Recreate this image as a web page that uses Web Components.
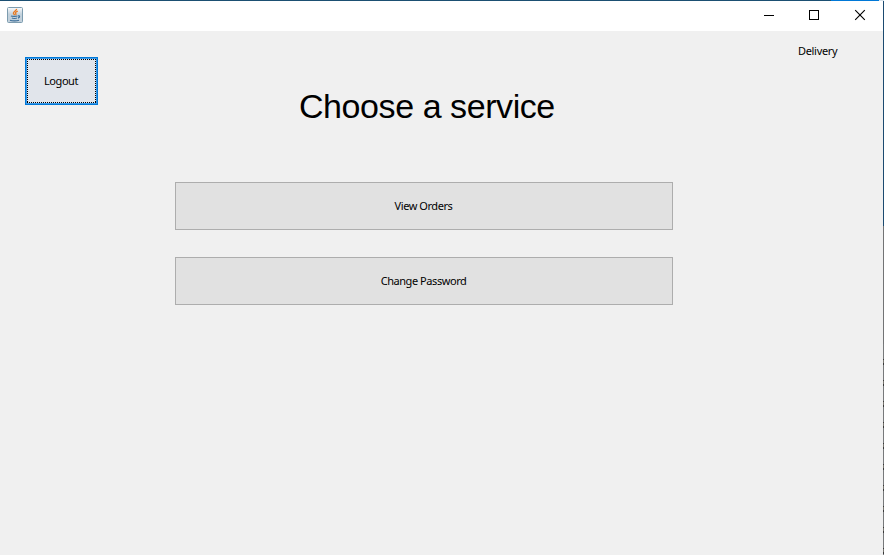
<!DOCTYPE html>
<html lang="en"><head><meta charset="utf-8"><title>Choose a service</title>
<style>html,body{margin:0;height:100%;overflow:hidden;background:#f0f0f0}</style></head>
<body>
<app-window>
  <title-bar slot="title"></title-bar>
  <service-view></service-view>
</app-window>
<script>
function define(name, html) {
  const t = document.createElement('template');
  t.innerHTML = html;
  customElements.define(name, class extends HTMLElement {
    constructor() {
      super();
      this.attachShadow({mode: 'open'}).append(t.content.cloneNode(true));
    }
  });
}

define('app-window', `<style>
:host{display:grid;grid-template:1px 30px 1fr / 1fr 1px;width:884px;height:555px;background:#f0f0f0;overflow:hidden;font:11px/14px "Noto Sans","DejaVu Sans",sans-serif;color:#000}
.top{grid-column:1/3;background:linear-gradient(90deg,#1b4f72 0 831px,#0078d7 831px 879px,#d7e3ec 879px)}
.side{grid-column:2;grid-row:2/4;background:
 linear-gradient(#1b4a70 0 225px,transparent 225px),
 repeating-linear-gradient(#77797b 0 14px,#77797b 14px 15px,#39393a 15px 16px,#77756f 16px 19px,#39393a 19px 21px) 0 343px no-repeat,
 #727375}
</style><div class="top"></div><slot name="title"></slot><div class="side"></div><slot></slot>`);

define('title-bar', `<style>
:host{display:flex;justify-content:space-between;align-items:stretch;background:#fff;grid-column:1}
java-icon{margin:6px 0 0 7px}
nav{display:flex;margin-right:-1px}
nav svg{width:46px;height:30px;display:block;fill:none;stroke:#000;stroke-width:1}
</style><java-icon></java-icon><nav>
<svg viewBox="0 0 46 30"><path d="M18 14.5h10" shape-rendering="crispEdges"/></svg>
<svg viewBox="0 0 46 30"><path d="M17.5 9.5h9v9h-9z" shape-rendering="crispEdges"/></svg>
<svg viewBox="0 0 46 30"><path d="M17.2 9.2l9.6 9.6M26.8 9.2l-9.6 9.6" stroke-width="1.15"/></svg></nav>`);

define('java-icon', `<style>:host{display:block;width:16px;height:16px}svg{display:block}</style>
<svg width="16" height="16" viewBox="0 0 16 16">
<defs><linearGradient id="g" x2="0" y2="1"><stop stop-color="#fafbfc"/><stop offset=".45" stop-color="#c3d2dd"/><stop offset="1" stop-color="#c2d0db"/></linearGradient></defs>
<rect x=".5" y=".5" width="15" height="15" rx="1" fill="url(#g)" stroke="#7d9caf"/>
<path d="M9.6 1.8c.4 1.8-3.4 2.4-3.2 4.3.1 1 1.1 1.5 1.2 2.1M10.8 4.2C8.6 5 8 5.9 8.8 6.7c.4.5.2 1-.3 1.3" fill="none" stroke="#ea7a20" stroke-width="1.3"/>
<path d="M4 9c1 .5 5.4.5 6.3 0M4.9 11c1 .5 4 .5 5 0M3 13.2c2 .8 7 .8 9 0M10.8 8.9c2.4-.6 2.3 1.5.2 2.2" fill="none" stroke="#3d6f9a" stroke-width="1.2"/></svg>`);

define('service-view', `<style>
:host{display:grid;grid-template-columns:175px 498px 1fr;grid-template-rows:151px auto 1fr;grid-column:1}
header{grid-column:1/4;display:grid;grid-template-columns:175px 498px 1fr}
push-button[focused]{width:73px;height:48px;margin:26px 0 0 25px}
h1{font:400 34px/40px "Liberation Sans",Arial,sans-serif;letter-spacing:-.43px;margin:55px 0 0 124px;white-space:nowrap}
.user{margin:13px 0 0 125px;letter-spacing:-.32px}
.actions{grid-column:2;display:grid;grid-template-rows:48px 48px;gap:27px}
</style><header><push-button focused>Logout</push-button><h1>Choose a service</h1><div class="user">Delivery</div></header>
<div class="actions"><push-button>View Orders</push-button><push-button>Change Password</push-button></div>`);

define('push-button', `<style>
:host{display:block;box-sizing:border-box}
button{box-sizing:border-box;width:100%;height:100%;display:flex;align-items:center;justify-content:center;font:inherit;color:inherit;letter-spacing:-.44px;background:#e1e1e1;border:1px solid #adadad;padding:0 1px 0 0;margin:0;border-radius:0}
:host([focused]) button{border:1px solid #0078d7;box-shadow:inset 0 0 0 1px #3c9ae8;background:
 repeating-linear-gradient(90deg,#000 0 1px,transparent 1px 2px) 1px 1px/69px 1px no-repeat,
 repeating-linear-gradient(90deg,#000 0 1px,transparent 1px 2px) 1px 44px/69px 1px no-repeat,
 repeating-linear-gradient(#000 0 1px,transparent 1px 2px) 1px 1px/1px 44px no-repeat,
 repeating-linear-gradient(#000 0 1px,transparent 1px 2px) 69px 1px/1px 44px no-repeat,#e1e5eb}
</style><button><slot></slot></button>`);
</script></body></html>
